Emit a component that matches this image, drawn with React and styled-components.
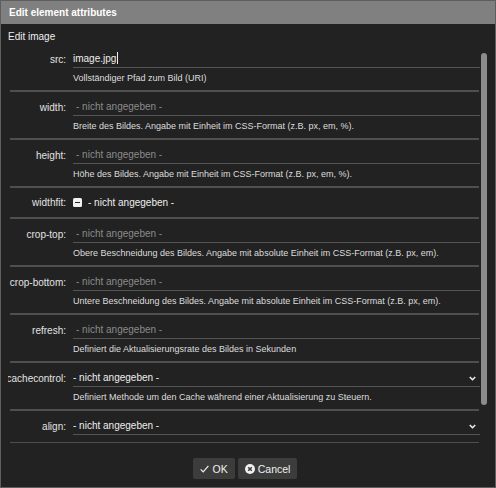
import React from "react";
import styled, { createGlobalStyle } from "styled-components";

const Global = createGlobalStyle`
  html, body { margin: 0; padding: 0; background: #222; }
  body { font-family: "Liberation Sans", Arial, sans-serif; }
  * { box-sizing: border-box; }
`;

const Dialog = styled.div`
  width: 496px;
  height: 488px;
  border: 1px solid #5e5e5e;
  background: #222;
  display: flex;
  flex-direction: column;
  font-family: "Liberation Sans", Arial, sans-serif;
  color: #e4e4e4;
`;

const TitleBar = styled.div`
  height: 23px;
  flex: none;
  background: #808080;
  padding-left: 8px;
  font-size: 10px;
  font-weight: bold;
  color: #fff;
  line-height: 24px;
`;

const Body = styled.div`
  flex: 1;
  min-height: 0;
  display: flex;
  flex-direction: column;
  padding: 0 7px;
`;

const Heading = styled.div`
  padding: 7px 0 1px;
  font-size: 10px;
  line-height: 12px;
  color: #eee;
`;

const Panel = styled.div`
  flex: 1;
  min-height: 0;
  display: flex;
  overflow: hidden;
`;

const List = styled.div`
  flex: 1;
  min-width: 0;
`;

const Track = styled.div`
  width: 8px;
  flex: none;
  padding: 9px 1px 0;
`;

const Thumb = styled.div`
  height: 352px;
  border-radius: 3px;
  background: #8c8c8c;
`;

const Row = styled.div`
  display: grid;
  grid-template-columns: 65px 1fr;
  padding: ${(p) => (p.$compact ? "6px 0 6px" : p.$last ? "7px 0 7px" : "7px 0 6px")};
`;

const Label = styled.div`
  display: flex;
  justify-content: flex-end;
  font-size: 10px;
  line-height: 17px;
  color: #e2e2e2;
  padding-right: 7px;
  white-space: nowrap;
`;

const FieldCol = styled.div`
  display: flex;
  flex-direction: column;
  min-width: 0;
`;

const InputLine = styled.div`
  height: 17px;
  display: flex;
  align-items: center;
  border-bottom: ${(p) => (p.$plain ? "none" : "1px solid #555")};
  font-size: 10px;
  line-height: 16px;
  color: #eee;
  padding-right: 4px;
`;

const Placeholder = styled.span`
  color: #8a8a8a;
  padding-left: 3px;
`;

const Value = styled.span`
  color: #eee;
  flex: 1;
`;

const Caret = styled.span`
  display: inline-block;
  width: 1px;
  height: 12px;
  background: #eee;
  vertical-align: -2px;
  margin-left: 1px;
`;

const Desc = styled.div`
  margin-top: 4px;
  font-size: 9px;
  line-height: 12px;
  color: #ddd;
  white-space: nowrap;
`;

const Rule = styled.div`
  height: 2px;
  margin: 0 1px 0 2px;
  background: #4f4f4f;
`;

const CheckBox = styled.span`
  width: 9px;
  height: 9px;
  border-radius: 1.5px;
  background: #f2f2f2;
  display: inline-flex;
  align-items: center;
  justify-content: center;
  margin-right: 6px;
  &::before {
    content: "";
    width: 5px;
    height: 1.5px;
    background: #222;
  }
`;

const Footer = styled.div`
  flex: none;
  display: flex;
  justify-content: center;
  gap: 3px;
  padding: 15px 6px 8px 0;
`;

const Button = styled.button`
  height: 21px;
  display: inline-flex;
  align-items: center;
  gap: ${(p) => p.$gap || 4}px;
  padding: 0 7px;
  border: none;
  border-radius: 2px;
  background: #3c3c3c;
  color: #f0f0f0;
  font-family: "Liberation Sans", Arial, sans-serif;
  font-size: 10.5px;
  cursor: pointer;
`;

const Chevron = () => (
  <svg width="7" height="5" viewBox="0 0 7 5">
    <polyline points="0.8,0.9 3.5,3.7 6.2,0.9" fill="none" stroke="#f0f0f0" strokeWidth="1.5" />
  </svg>
);

const CheckIcon = () => (
  <svg width="9" height="8" viewBox="0 0 9 8">
    <polyline points="0.7,4.3 3.2,6.9 8.4,0.9" fill="none" stroke="#f0f0f0" strokeWidth="1.2" />
  </svg>
);

const CancelIcon = () => (
  <svg width="10" height="10" viewBox="0 0 10 10">
    <circle cx="5" cy="5" r="5" fill="#f0f0f0" />
    <path d="M3.2 3.2 L6.8 6.8 M6.8 3.2 L3.2 6.8" stroke="#3c3c3c" strokeWidth="1.5" />
  </svg>
);

const EMPTY = "- nicht angegeben -";

const rows = [
  { label: "src", kind: "text", value: "image.jpg", caret: true, desc: "Vollständiger Pfad zum Bild (URI)" },
  { label: "width", kind: "text", desc: "Breite des Bildes. Angabe mit Einheit im CSS-Format (z.B. px, em, %)." },
  { label: "height", kind: "text", desc: "Höhe des Bildes. Angabe mit Einheit im CSS-Format (z.B. px, em, %)." },
  { label: "widthfit", kind: "check" },
  { label: "crop-top", kind: "text", desc: "Obere Beschneidung des Bildes. Angabe mit absolute Einheit im CSS-Format (z.B. px, em)." },
  { label: "crop-bottom", kind: "text", desc: "Untere Beschneidung des Bildes. Angabe mit absolute Einheit im CSS-Format (z.B. px, em)." },
  { label: "refresh", kind: "text", desc: "Definiert die Aktualisierungsrate des Bildes in Sekunden" },
  { label: "cachecontrol", kind: "select", desc: "Definiert Methode um den Cache während einer Aktualisierung zu Steuern." },
  { label: "align", kind: "select" },
];

function FieldInput({ row }) {
  if (row.kind === "check") {
    return (
      <InputLine $plain>
        <CheckBox />
        <span>{EMPTY}</span>
      </InputLine>
    );
  }
  if (row.kind === "select") {
    return (
      <InputLine>
        <Value>{EMPTY}</Value>
        <Chevron />
      </InputLine>
    );
  }
  return (
    <InputLine>
      {row.value ? (
        <Value>
          {row.value}
          {row.caret && <Caret />}
        </Value>
      ) : (
        <Placeholder>{EMPTY}</Placeholder>
      )}
    </InputLine>
  );
}

export default function App() {
  return (
    <>
      <Global />
      <Dialog>
        <TitleBar>Edit element attributes</TitleBar>
        <Body>
          <Heading>Edit image</Heading>
          <Panel>
            <List>
              {rows.map((row) => (
                <React.Fragment key={row.label}>
                  <Row $compact={row.kind === "check"} $last={!row.desc && row.kind !== "check"}>
                    <Label>{row.label}:</Label>
                    <FieldCol>
                      <FieldInput row={row} />
                      {row.desc && <Desc>{row.desc}</Desc>}
                    </FieldCol>
                  </Row>
                  <Rule />
                </React.Fragment>
              ))}
            </List>
            <Track>
              <Thumb />
            </Track>
          </Panel>
          <Footer>
            <Button>
              <CheckIcon />
              OK
            </Button>
            <Button $gap={3}>
              <CancelIcon />
              Cancel
            </Button>
          </Footer>
        </Body>
      </Dialog>
    </>
  );
}
